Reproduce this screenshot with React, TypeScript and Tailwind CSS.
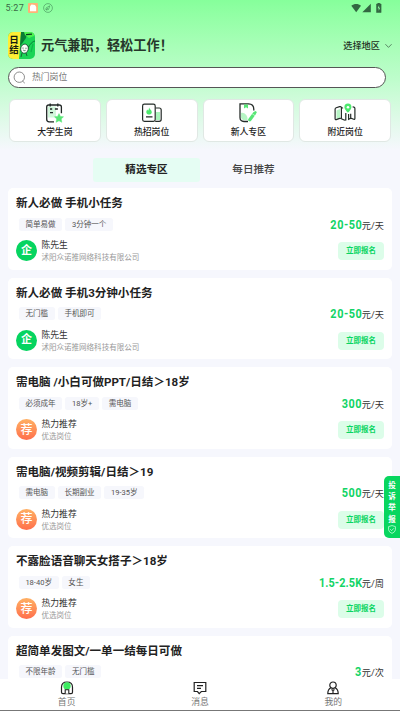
import React from 'react';

type Job = {
  title: string;
  tags: string[];
  price: string;
  unit: string;
  company?: boolean;
  brief?: boolean;
};

const jobs: Job[] = [
  { title: '新人必做 手机小任务', tags: ['简单易做', '3分钟一个'], price: '20-50', unit: '元/天', company: true },
  { title: '新人必做 手机3分钟小任务', tags: ['无门槛', '手机即可'], price: '20-50', unit: '元/天', company: true },
  { title: '需电脑 /小白可做PPT/日结＞18岁', tags: ['必须成年', '18岁+', '需电脑'], price: '300', unit: '元/天' },
  { title: '需电脑/视频剪辑/日结＞19', tags: ['需电脑', '长期副业', '19-35岁'], price: '500', unit: '元/天' },
  { title: '不露脸语音聊天女搭子＞18岁', tags: ['18-40岁', '女生'], price: '1.5-2.5K', unit: '元/周' },
  { title: '超简单发图文/一单一结每日可做', tags: ['不限年龄', '无门槛'], price: '3', unit: '元/次', brief: true },
];

function StatusBar() {
  return (
    <div className="flex h-[16px] items-center pl-[5.5px] pr-[18px] text-[#3b6b48]">
      <span className="w-[22px] text-[9px] leading-[16px] tracking-[0.3px]">5:27</span>
      <svg className="h-[10px] w-[10px]" viewBox="0 0 10 10">
        <rect width="10" height="10" rx="1" fill="#ffb277" />
        <path d="M2 8.3V3.2L3.5 1.5 7 2 8.2 4V8.3Z" fill="#fff" />
      </svg>
      <svg className="ml-[5px] h-[10px] w-[10px]" viewBox="0 0 10 10" fill="none" stroke="#4f9b63" strokeWidth=".7">
        <circle cx="5" cy="5" r="4.4" />
        <path d="M3 7V5l3.8-2.2L5.5 6.5 3 7l2-2" />
      </svg>
      <svg className="ml-auto h-[10px] w-[31px]" viewBox="0 0 31 10" fill="#326741">
        <path d="M.3 2.7C3.1.3 7.3.3 10 2.7L5.2 9.2Z" />
        <path d="M19.8.7V9.2H11.3Z" />
        <path d="M25.5 1h1.3V0h2v1h1.3v8.5h-4.6Z" stroke="#326741" strokeWidth=".5" />
        <path d="M28.1 2.2 26.6 5.2h1.1v2.5L29.2 4.7h-1.1Z" fill="#8cfba1" />
      </svg>
    </div>
  );
}

function Logo() {
  return (
    <div className="relative flex h-[27px] w-[27px] overflow-hidden rounded-[5px] bg-[#1bd556]">
      <svg className="absolute inset-0 h-full w-full" viewBox="0 0 27 27">
        <path d="M0 0H13L11 27H0Z" fill="#ffee35" />
        <path d="M13 0h6l-1 6-5 7-1 1Z" fill="#087c35" />
        <path d="M16 0h10v4l-5 2-4-3Z" fill="#4cf34e" />
        <path d="M18 2.6l6-.4" stroke="#063b1c" strokeWidth="1.2" />
        <path d="M27 9c-4 1-6 5-8 9" fill="none" stroke="#087b37" strokeWidth="1" />
        <path d="M25 12l-2 8" stroke="#10b64a" strokeWidth="1.3" />
        <ellipse cx="16.5" cy="16.7" rx="3.8" ry="4.6" fill="#f8fff8" stroke="#082f20" strokeWidth=".7" transform="rotate(12 16.5 16.7)" />
        <path d="M15 15.5v1.2m3-1v1.2m-2.8 1.2q1.2 1 2.4.2M14 21l-1 4m5-4 1 3" fill="none" stroke="#173528" strokeWidth=".7" />
      </svg>
      <div className="relative flex w-[12px] flex-col items-center pt-[3px] text-[9.5px] font-bold leading-[10.3px] text-[#161c10]">
        <span>日</span>
        <span>结</span>
      </div>
    </div>
  );
}

function CalendarIcon() {
  return (
    <svg className="h-[20px] w-[22px]" viewBox="0 0 22 20" fill="none">
      <rect x="4" y="3.5" width="8" height="11" fill="#d2f8dc" />
      <path d="M10 18.8H5.2q-2.5 0-2.5-2.5V4q0-2 2-2h10.5q2.2 0 2.2 2v6.2M6.2.4v3.2M13.8.4v3.2" stroke="#202725" strokeWidth="1.3" />
      <path d="M6 6h2.2m2.7 0h3M6 9.7h3" stroke="#202725" strokeWidth="1.3" />
      <path d="m15 10.6 1.4 2.8 3.1.4-2.3 2.1.6 3.4-2.8-1.6-2.9 1.6.6-3.4-2.2-2.1 3.1-.4Z" fill="#58e676" stroke="#58e676" strokeWidth=".5" />
    </svg>
  );
}
function HotIcon() {
  return (
    <svg className="h-[20px] w-[22px]" viewBox="0 0 22 20" fill="none">
      <path d="M15 9h4v8h-4Z" fill="#a8f5ba" />
      <rect x="1.6" y="1.1" width="12.6" height="17.2" rx="1.8" stroke="#252c29" strokeWidth="1.2" />
      <path d="M14.5 5h3.7q2 0 2 2v9.3q0 2-2 2h-4M5 13.8h6.5" stroke="#252c29" strokeWidth="1.2" />
      <path d="M8.2 4.6c.3 2 2.6 2.3 2.6 4.6 0 3.2-5.4 3.2-5.5 0 0-1.3.6-2.1 1.2-2.6l.5 1.2c1-.7.7-2.2 1.2-3.2Z" fill="#4dea6e" />
    </svg>
  );
}
function BookIcon() {
  return (
    <svg className="h-[20px] w-[22px]" viewBox="0 0 22 20" fill="none">
      <path d="M4 10c3-1 7 2 6.5 7H6L4 15Z" fill="#b7f5c5" />
      <path d="M11 18.5H7q-4-.2-4-4V.8h8.5c3.5.1 5.3 2.2 5.3 5.5v1.2" stroke="#252c29" strokeWidth="1.3" />
      <path d="M7 1.4h4v4L9 4.3 7 5.4Z" fill="#58e676" />
      <path d="m12.8 16.8 4.4-6" stroke="#58e676" strokeWidth="3.2" strokeLinecap="round" />
      <path d="m17.9 9.8.5-.5" stroke="#58e676" strokeWidth="2.6" strokeLinecap="round" />
      <path d="m15.2 10.8 3 2" stroke="#dcffe3" strokeWidth=".7" />
    </svg>
  );
}
function MapIcon() {
  return (
    <svg className="h-[20px] w-[22px]" viewBox="0 0 22 20" fill="none">
      <path d="M2.5 7.5 6 6v9l-3.5 1Z" fill="#b7f5c5" />
      <path d="M7.4 15.2V4.9q0-1.6-1.8-1.3L2.2 4.8Q1.1 5.2 1.1 6.3v9.5q0 1.2 1.2.8l3.3-1.2q1-.4 1.8.3l2.2 1.1q1 .5 2.2.2V10m-4.4-4.7 1.7-.6M14.6 11v5.2l2.2-1m-.1-4.5v4.4l3 1.1q1.2.4 1.2-.8V5.5q0-1.1-1-1.4l-1.3-.4" stroke="#252c29" strokeWidth="1.2" />
      <path d="M14 .6c2.3 0 3.7 1.7 3.4 3.8C17.2 6.6 14 9.6 14 9.6s-3.4-3-3.6-5.2C10.2 2.3 11.6.6 14 .6Z" fill="#4de96e" />
      <circle cx="14" cy="4.2" r="1.3" fill="#fff" />
    </svg>
  );
}

const shortcuts = [
  { label: '大学生岗', icon: <CalendarIcon /> },
  { label: '热招岗位', icon: <HotIcon /> },
  { label: '新人专区', icon: <BookIcon /> },
  { label: '附近岗位', icon: <MapIcon /> },
];

function JobCard({ job }: { job: Job }) {
  return (
    <article className="h-[81.5px] shrink-0 rounded-[5px] bg-white px-2 pt-[7.2px]">
      <h2 className="h-[16px] whitespace-nowrap text-[11.55px] font-bold leading-[16px] text-[#222]">{job.title}</h2>
      <div className="flex h-[23px] pt-[6.5px]">
        <div className="flex gap-[3px] pl-[2.7px]">
          {job.tags.map((t) => (
            <span key={t} className="h-[12.7px] whitespace-nowrap rounded-[2.5px] bg-[#f6f7fc] px-[6.7px] text-[7.55px] leading-[13px] text-[#555]">
              {t}
            </span>
          ))}
        </div>
        <div className="ml-auto flex h-[15px] items-baseline whitespace-nowrap leading-[13.5px]">
          <span
            className={`origin-right scale-x-[0.88] text-[12.4px] font-bold text-[#12d466] ${
              job.price.length > 5 ? 'tracking-[0.1px]' : 'tracking-[0.6px]'
            }`}
          >
            {job.price}
          </span>
          <span className="text-[9.2px] text-[#333]">{job.unit}</span>
        </div>
      </div>
      {!job.brief && (
        <div className="flex pt-[4.5px]">
          <div
            className={`mt-[1.5px] flex h-[21px] w-[21px] items-center justify-center rounded-full text-white ${
              job.company ? 'bg-[#06d460] text-[11px] font-bold' : 'bg-linear-to-b from-[#ffb064] to-[#ff6d4c] text-[12px] font-medium'
            }`}
          >
            <span className="leading-[20px]">{job.company ? '企' : '荐'}</span>
          </div>
          <div className="ml-[4.5px] pt-[0.5px]">
            <p className="text-[8.8px] leading-[13px] text-[#333]">{job.company ? '陈先生' : '热力推荐'}</p>
            <p className="text-[7.53px] leading-[12px] text-[#999]">{job.company ? '沭阳众诺推网络科技有限公司' : '优选岗位'}</p>
          </div>
          <button className="ml-auto mt-[3.2px] h-[18px] w-[46px] rounded-[4px] bg-[#dcfde9] text-[7.5px] font-bold leading-[18px] text-[#08d562]">
            立即报名
          </button>
        </div>
      )}
    </article>
  );
}

export default function App() {
  return (
    <div className="relative flex h-[711px] w-[400px] flex-col overflow-hidden bg-[#f6f7fd] font-[Roboto,'Noto_Sans_CJK_SC',sans-serif]">
      <div className="flex h-[150px] shrink-0 flex-col bg-linear-to-b from-[#86ff9b] via-[#bdfdcb] via-52% to-[#f6f7fd]">
        <StatusBar />
        <header className="mt-[16px] flex h-[27px] items-center pl-[8px] pr-[8.5px]">
          <Logo />
          <h1 className="ml-[6px] text-[13.2px] font-bold leading-[20px] text-[#26372b]">元气兼职，轻松工作！</h1>
          <span className="ml-auto text-[9.2px] font-medium text-[#1d3022]">选择地区</span>
          <svg className="ml-[4.5px] h-[6px] w-[7px]" viewBox="0 0 7 6" fill="none" stroke="#466b50" strokeWidth=".8">
            <path d="m.4 1.2 3.1 3.2 3.1-3.2" />
          </svg>
        </header>
        <div className="ml-[8px] mt-[7.5px] flex h-[21.5px] w-[377.5px] shrink-0 items-center rounded-full border border-[#555] bg-white pl-[3.5px]">
          <svg className="h-[13px] w-[13px]" viewBox="0 0 13 13" fill="none" stroke="#808080" strokeWidth=".9">
            <circle cx="6.3" cy="6.2" r="5.2" />
            <path d="m9.5 10 2.3 2.2" />
          </svg>
          <span className="ml-[6.5px] text-[8.8px] text-[#777]">热门岗位</span>
        </div>
        <div className="mt-[10.5px] flex gap-[5px] pl-[9px] pr-[9px]">
          {shortcuts.map((s) => (
            <div key={s.label} className="flex h-[43px] flex-1 flex-col items-center rounded-[6px] border border-[#e0e8e4] bg-white pt-[3px]">
              {s.icon}
              <span className="mt-[3px] text-[8.9px] font-medium leading-[12px] text-[#1d1d1d]">{s.label}</span>
            </div>
          ))}
        </div>
      </div>
      <nav className="mt-[8px] flex h-[24px] shrink-0 pl-[93px] text-center text-[10.6px] leading-[24px]">
        <span className="w-[107px] rounded-[3px] bg-[#e5fdf3] font-bold text-[#222]">精选专区</span>
        <span className="w-[107px] font-medium text-[#444]">每日推荐</span>
      </nav>
      <main className="mt-[6.2px] flex min-h-0 flex-1 flex-col gap-[8px] overflow-hidden px-2">
        {jobs.map((j) => (
          <JobCard key={j.title} job={j} />
        ))}
      </main>
      <footer className="flex h-[32px] shrink-0 border-b border-[#777] bg-white text-[8.8px] leading-[12px] text-[#777]">
        <div className="flex flex-1 flex-col items-center pt-[2px]">
          <svg className="h-[14px] w-[14px]" viewBox="0 0 14 14" fill="none">
            <path d="M1.5 11.3V6.2Q1.5 1 7 1t5.5 5.2v5.1q0 1.4-1.4 1.4H2.9q-1.4 0-1.4-1.4Z" stroke="#222" strokeWidth="1.2" />
            <circle cx="7" cy="5" r="3.7" fill="#3dec61" />
            <path d="M5.2 12.7V8.8h3.6v3.9" fill="#fff" stroke="#222" strokeWidth="1.1" />
          </svg>
          <span className="mt-[1px]">首页</span>
        </div>
        <div className="flex flex-1 flex-col items-center pt-[2px]">
          <svg className="h-[14px] w-[14px]" viewBox="0 0 14 14" fill="none" stroke="#222" strokeWidth="1.2">
            <path d="M1.2 1.5h11.6v9H8.3L6.2 12.6 4.5 10.5H1.2ZM4 4.6h6M4 7.4h4" />
          </svg>
          <span className="mt-[1px]">消息</span>
        </div>
        <div className="flex flex-1 flex-col items-center pt-[2px]">
          <svg className="h-[14px] w-[14px]" viewBox="0 0 14 14" fill="none" stroke="#222" strokeWidth="1.2">
            <circle cx="7" cy="4.2" r="3.2" />
            <path d="M4.8 6.8Q1.8 8.5 1.8 12.6h10.4q0-4.1-3-5.8M5.5 8.5 7 9.6l1.5-1.1M7 9.6v2.5" />
          </svg>
          <span className="mt-[1px]">我的</span>
        </div>
      </footer>
      <aside className="absolute right-0 top-[476px] flex h-[62px] w-[16px] flex-col items-center rounded-l-[5px] bg-[#08d65f] pt-[4px] text-[7.5px] font-bold leading-[11.2px] text-white">
        <span>投</span>
        <span>诉</span>
        <span>举</span>
        <span>报</span>
        <svg className="mt-[0.5px] h-[9px] w-[8px]" viewBox="0 0 8 9" fill="none" stroke="#c9ffdd" strokeWidth=".8">
          <path d="M4 .6 7.4 1.6v3.2Q7.2 7 4 8.4.8 7 .6 4.8V1.6ZM2.2 4.2l1.4 1.4 2.3-2.3" />
        </svg>
      </aside>
    </div>
  );
}
